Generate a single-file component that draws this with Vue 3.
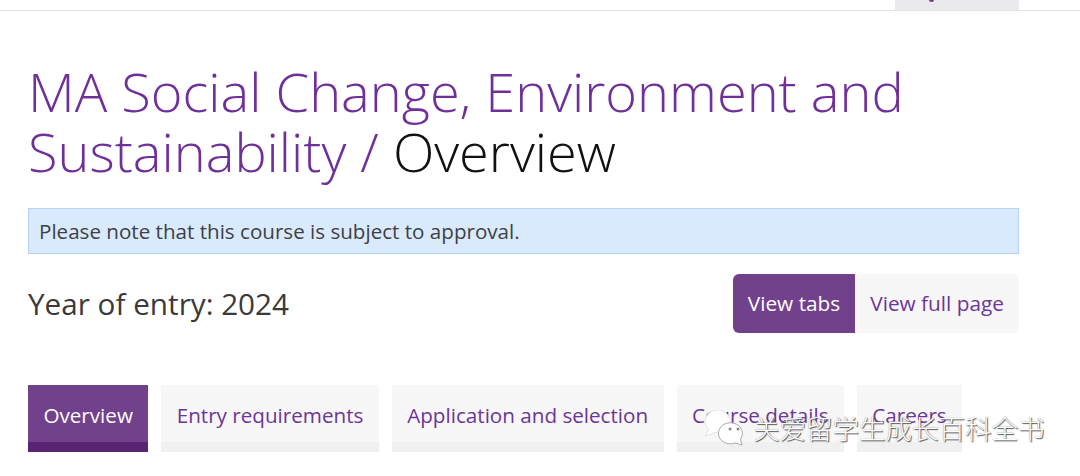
<template>
  <div class="page">
    <div class="topbar">
      <div class="topbar-inner">
        <div class="search-tab"><span class="search-dot"></span></div>
      </div>
    </div>

    <div class="content">
      <h1 class="title">MA Social Change, Environment and Sustainability / <span class="title-current">Overview</span></h1>

      <div class="notice">Please note that this course is subject to approval.</div>

      <div class="entry-row">
        <div class="entry-year">Year of entry: 2024</div>
        <div class="view-toggle">
          <a class="toggle-btn active">View tabs</a>
          <a class="toggle-btn">View full page</a>
        </div>
      </div>

      <div class="tabs">
        <a
          v-for="tab in tabs"
          :key="tab"
          class="tab"
          :class="{ active: tab === 'Overview' }"
        >{{ tab }}</a>
      </div>
    </div>

    <div class="watermark">
      <svg class="wm-icon" width="46" height="36" viewBox="0 0 46 36">
        <path d="M3 26 L7 19 A12.5 11 0 1 1 15 22 Z" fill="#fff" stroke="#d8d8d8" stroke-width="0.7" stroke-linejoin="round" />
        <path d="M40 35 L38.5 29 A12 10.5 0 1 0 33 33 Z" fill="#fff" stroke="#aaa" stroke-width="1" stroke-linejoin="round" />
        <circle cx="28" cy="19" r="1.5" fill="#888" />
        <circle cx="36" cy="19" r="1.5" fill="#888" />
      </svg>
      <span class="wm-text">关爱留学生成长百科全书</span>
    </div>
  </div>
</template>

<script setup>
const tabs = ['Overview', 'Entry requirements', 'Application and selection', 'Course details', 'Careers']
</script>

<style>
html, body {
  margin: 0;
  background: #fff;
}
</style>

<style scoped>
.page {
  position: relative;
  width: 1080px;
  height: 476px;
  overflow: hidden;
  background: #fff;
  font-family: "Open Sans", "Noto Sans", sans-serif;
}

.topbar {
  height: 10px;
  border-bottom: 1px solid #e4e4e6;
}

.topbar-inner {
  display: flex;
  justify-content: flex-end;
  width: 1019px;
  height: 100%;
}

.search-tab {
  width: 124px;
  height: 10px;
  background: #eaeaec;
  position: relative;
}

.search-dot {
  position: absolute;
  left: 34px;
  top: -2px;
  width: 5px;
  height: 4px;
  border-radius: 50%;
  background: #6f3a96;
}

.content {
  width: 991px;
  margin-left: 28px;
}

.title {
  margin: 50px 0 0;
  font-size: 54.15px;
  line-height: 60px;
  font-weight: 300;
  color: #70309a;
}

.title-current {
  color: #111;
}

.notice {
  margin-top: 27px;
  height: 44px;
  line-height: 44px;
  padding-left: 10px;
  background: #d9eafd;
  border: 1px solid #b5d3f5;
  font-size: 20.6px;
  color: #3d4045;
}

.entry-row {
  display: flex;
  justify-content: space-between;
  align-items: center;
  margin-top: 20px;
}

.entry-year {
  font-size: 29.7px;
  color: #3a3a3a;
}

.view-toggle {
  display: flex;
  height: 59px;
  border-radius: 6px;
  overflow: hidden;
}

.toggle-btn {
  display: flex;
  align-items: center;
  padding: 0 15px 2px;
  font-size: 20.8px;
  background: #f7f7f8;
  color: #6c3596;
}

.toggle-btn.active {
  background: #72418b;
  color: #fff;
}

.tabs {
  display: flex;
  gap: 13px;
  margin-top: 52px;
}

.tab {
  display: flex;
  align-items: center;
  box-sizing: border-box;
  height: 67px;
  padding: 3px 15.4px 0;
  font-size: 20.65px;
  background: #f7f7f8;
  border-bottom: 10px solid #f0f0f0;
  color: #6c3596;
}

.tab.active {
  background: #72418b;
  border-bottom-color: #5a2474;
  color: #fff;
}

.watermark {
  position: absolute;
  left: 702px;
  top: 408px;
  display: flex;
  align-items: center;
  gap: 5px;
}

.wm-text {
  font-family: "Noto Sans CJK SC", sans-serif;
  font-size: 26.5px;
  font-weight: 300;
  color: #fff;
  text-shadow: 1px 1px 1px #555, 0 0 1px #777;
}
</style>
